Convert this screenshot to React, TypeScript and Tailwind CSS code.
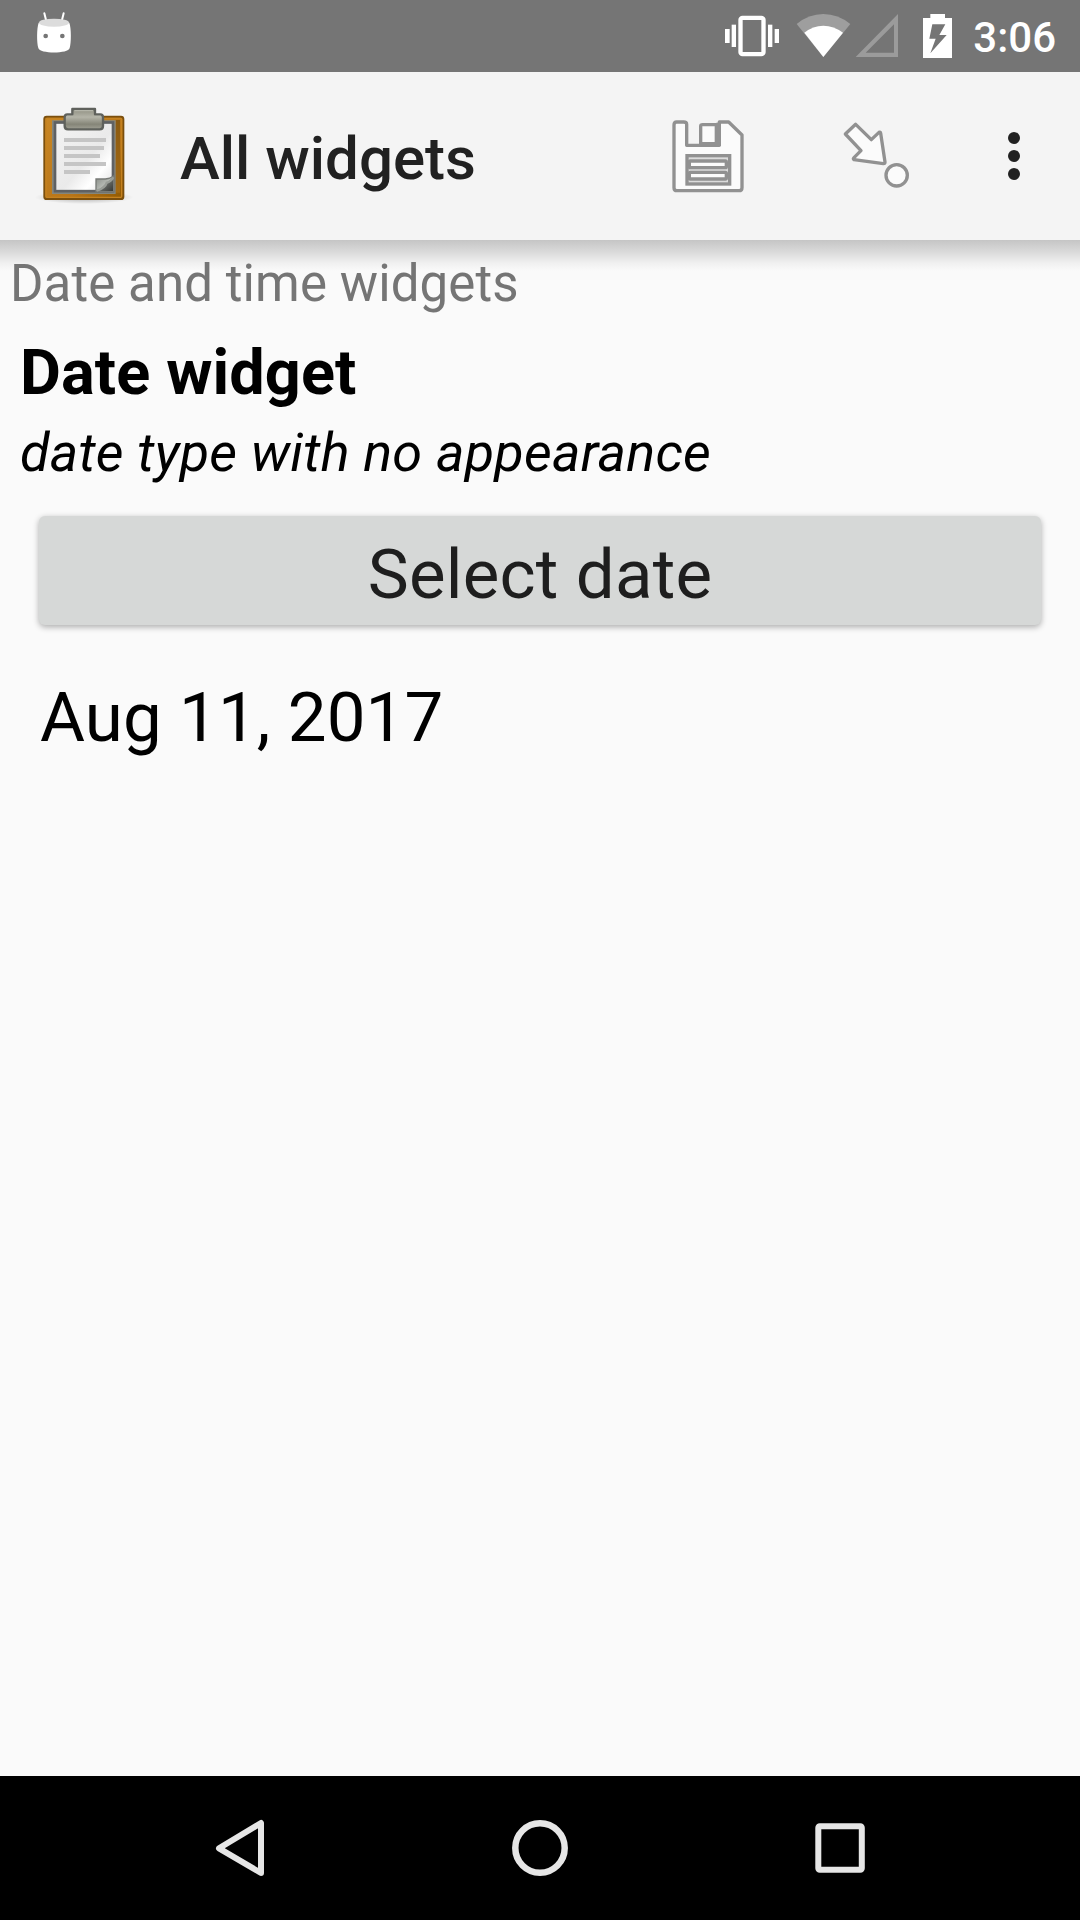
function StatusBar() {
  return (
    <div className="flex h-[72px] shrink-0 items-center justify-between bg-[#757575] text-white">
      <svg className="ml-[30px] h-[72px] w-[50px]" viewBox="90 0 150 216" fill="#fff">
        <path d="M133 40L139 64M191 40L185 64" stroke="#fff" strokeWidth="6" strokeLinecap="round" />
        <path d="M116 68C110 85 110 128 115 144C118 162 206 162 209 144C214 128 214 85 208 68Z" />
        <ellipse cx="162" cy="68" rx="45" ry="12" fill="#dcdcdc" />
        <circle cx="137" cy="108" r="7" fill="#757575" />
        <circle cx="187" cy="108" r="7" fill="#757575" />
      </svg>
      <div className="flex items-center">
        <svg className="h-[72px] w-[250px]" viewBox="0 0 750 216" fill="#fff">
          <rect x="91.500" y="53.500" width="69" height="109" rx="6" fill="none" stroke="#fff" strokeWidth="13" />
          <rect x="45" y="87" width="14" height="42" />
          <rect x="65" y="74" width="13" height="67" />
          <rect x="174" y="74" width="13" height="67" />
          <rect x="194" y="87" width="13" height="42" />
          <path d="M340 171L260 72Q296 42 340 42T421 72Z" fill="#9e9e9e" />
          <path d="M340 171L283 98Q309 77 340 77T399 98Z" />
          <path d="M564 42V171H437ZM552 73L467 158H552Z" fill="#9b9b9b" fillRule="evenodd" />
          <path d="M661 42H705V54H726V174H639V54H661ZM667 73L658 116H677L661 160L710 105H688L706 73Z" fillRule="evenodd" />
        </svg>
        <span className="mr-[24px] ml-[13px] pt-[2px] text-[42px] leading-[49px] font-medium">3:06</span>
      </div>
    </div>
  );
}

function ClipboardIcon() {
  return (
    <svg className="h-[130px] w-[120px] shrink-0" viewBox="0 0 360 390">
      <defs>
        <linearGradient id="board" x1="0" y1="0" x2="1" y2="1">
          <stop offset="0" stopColor="#c98724" />
          <stop offset=".65" stopColor="#b87518" />
          <stop offset="1" stopColor="#8f5902" />
        </linearGradient>
        <linearGradient id="boardRight" x1="0" y1="0" x2="0" y2="1">
          <stop offset="0" stopColor="#8a5a12" />
          <stop offset="1" stopColor="#a56a12" />
        </linearGradient>
        <linearGradient id="paper" x1="0" y1="0" x2="1" y2="1">
          <stop offset="0" stopColor="#f3f3f3" />
          <stop offset=".55" stopColor="#eaeaea" />
          <stop offset=".75" stopColor="#ffffff" />
          <stop offset="1" stopColor="#dddddd" />
        </linearGradient>
        <linearGradient id="clip" x1="0" y1="0" x2="0" y2="1">
          <stop offset="0" stopColor="#8e8e80" />
          <stop offset=".4" stopColor="#b4b4a8" />
          <stop offset=".75" stopColor="#858578" />
          <stop offset="1" stopColor="#a0a094" />
        </linearGradient>
        <linearGradient id="curl" x1="0" y1="0" x2="1" y2="1">
          <stop offset="0" stopColor="#858984" />
          <stop offset=".5" stopColor="#b4b8b2" />
          <stop offset=".6" stopColor="#60635f" />
          <stop offset="1" stopColor="#333532" />
        </linearGradient>
        <radialGradient id="ground">
          <stop offset="0" stopColor="#000" stopOpacity=".3" />
          <stop offset="1" stopColor="#000" stopOpacity="0" />
        </radialGradient>
      </defs>
      <ellipse cx="162" cy="322" rx="148" ry="20" fill="url(#ground)" />
      <rect x="43" y="80" width="237" height="247" rx="7" fill="url(#board)" stroke="#7b4f0d" strokeWidth="6" />
      <rect x="48" y="85" width="227" height="237" rx="3" fill="none" stroke="#c58220" strokeWidth="4" />
      <path d="M257 90H270V308H257Z" fill="url(#boardRight)" />
      <path d="M66 91H257V312H66Z" fill="#84867d" />
      <rect x="75" y="97.500" width="174" height="206" fill="url(#paper)" stroke="#5f6163" strokeWidth="8" />
      <g fill="#c5c5c5">
        <rect x="102" y="144" width="126" height="12" />
        <rect x="102" y="168" width="120" height="12" />
        <rect x="102" y="192" width="108" height="12" />
        <rect x="102" y="216" width="126" height="12" />
        <rect x="102" y="240" width="78" height="12" />
      </g>
      <path d="M198 267H226Q240 266 251 258V305H198Z" fill="url(#curl)" stroke="#777a76" strokeWidth="4" />
      <path d="M200 302Q226 294 230 278Q243 276 250 262" fill="none" stroke="#999d97" strokeWidth="7" />
      <path d="M127 57H195V73H211Q219 73 219 82V108Q219 118 209 118H114Q104 118 104 108V82Q104 73 112 73H127Z" fill="url(#clip)" stroke="#5f615c" strokeWidth="7" strokeLinejoin="round" />
      <path d="M110 79H129M193 79H213M133 62H189" stroke="#b4b5a9" strokeWidth="4" />
    </svg>
  );
}

function AppBar() {
  return (
    <header className="flex h-[168px] shrink-0 items-start bg-[#f4f4f4]">
      <div className="mt-[18px] ml-[30px]">
        <ClipboardIcon />
      </div>
      <h1 className="mt-[52px] ml-[30px] w-[470px] text-[60px] leading-[70px] font-medium text-[#212121]">All widgets</h1>
      <svg className="mt-[28px] h-[110px] w-[120px] shrink-0" viewBox="0 0 360 330" fill="#fbfbfb" stroke="#919191" strokeWidth="10">
        <path d="M80 66H101Q110 66 110 73V136H208V66H236L276 105V263Q276 272 267 272H81Q72 272 72 263V75Q72 66 80 66Z" strokeLinejoin="round" />
        <path d="M152 134V79Q152 74 158 74H199V131H152" strokeLinejoin="round" />
        <path d="M206 68V138" strokeWidth="14" />
        <rect x="111" y="167" width="128" height="85" fill="#dcdcdc" />
        <rect x="118" y="183" width="111" height="20" rx="3" />
        <rect x="118" y="217" width="111" height="20" rx="3" />
      </svg>
      <svg className="mt-[28px] ml-[50px] h-[110px] w-[260px] shrink-0" viewBox="0 0 780 330">
        <g fill="#fbfbfb" stroke="#919191" strokeWidth="10" strokeLinejoin="round">
          <path d="M76 102L107 73L154 119L177 97Q181 95 182 100L195 186Q195 191 190 191L102 179Q98 177 102 173L123 152Z" />
          <circle cx="230" cy="226" r="32" />
        </g>
        <g fill="#212121">
          <circle cx="582" cy="114" r="18" />
          <circle cx="582" cy="168" r="18" />
          <circle cx="582" cy="222" r="18" />
        </g>
      </svg>
    </header>
  );
}

function NavBar() {
  return (
    <nav className="flex h-[144px] shrink-0 items-center justify-center gap-[180px] bg-black">
      <svg className="size-[120px]" viewBox="0 0 120 120" fill="none" stroke="#e6e6e6" strokeWidth="6" strokeLinejoin="round">
        <path d="M81 35V85L39 60.300Z" />
      </svg>
      <svg className="size-[120px]" viewBox="0 0 120 120" fill="none" stroke="#e6e6e6" strokeWidth="6.500">
        <circle cx="60" cy="60" r="24.700" />
      </svg>
      <svg className="size-[120px]" viewBox="0 0 120 120" fill="none" stroke="#e6e6e6" strokeWidth="6">
        <rect x="38.300" y="38.300" width="43.500" height="43.500" rx="1.500" />
      </svg>
    </nav>
  );
}

export default function App() {
  return (
    <div className="flex h-[1920px] w-[1080px] flex-col overflow-hidden bg-[#fafafa] font-['Roboto',sans-serif]">
      <StatusBar />
      <AppBar />
      <main className="flex flex-1 flex-col bg-[linear-gradient(#c5c5c5,#dadada_12px,#f0f0f0_23px,#fafafa_31px)]">
        <p className="mt-[14px] pl-[10px] text-[51px] leading-[60px] tracking-[0.1px] text-[#757575]">Date and time widgets</p>
        <h2 className="mt-[22px] pl-[20px] text-[63px] leading-[74px] font-bold tracking-[0.1px] text-black">Date widget</h2>
        <p className="mt-[11px] pl-[20px] text-[54px] leading-[64px] tracking-[0.22px] text-black italic">date type with no appearance</p>
        <button className="mx-[39px] mt-[31px] h-[109px] rounded-[6px] bg-[#d6d8d7] pt-[8px] text-[69px] leading-[81px] tracking-[0.2px] text-[#1e1e1e] shadow-[0_2px_6px_rgba(0,0,0,0.32)]">
          Select date
        </button>
        <p className="mt-[52px] pl-[40px] text-[69px] leading-[81px] tracking-[0.12px] text-black">Aug 11, 2017</p>
      </main>
      <NavBar />
    </div>
  );
}
